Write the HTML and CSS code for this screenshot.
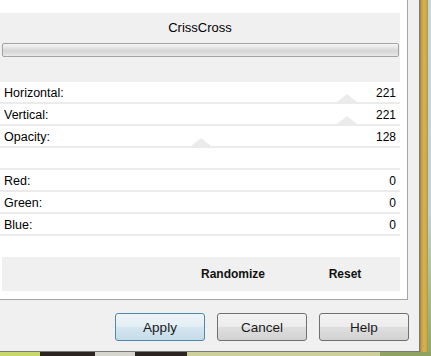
FILE: index.html
```html
<!DOCTYPE html>
<html>
<head>
<meta charset="utf-8">
<link rel="stylesheet" href="styles.css">
</head>
<body>
<div class="screen">
  <div class="top">
    <div class="dialog">
      <div class="panel">
        <div class="header">
          <div class="title">CrissCross</div>
          <div class="bar"></div>
        </div>
        <div class="rows">
          <div class="row"><span class="lbl">Horizontal:</span><span class="val">221</span><i class="thumb" style="left:86.7%"></i></div>
          <div class="row"><span class="lbl">Vertical:</span><span class="val">221</span><i class="thumb" style="left:86.7%"></i></div>
          <div class="row"><span class="lbl">Opacity:</span><span class="val">128</span><i class="thumb" style="left:50.2%"></i></div>
          <div class="row"></div>
          <div class="row"><span class="lbl">Red:</span><span class="val">0</span></div>
          <div class="row"><span class="lbl">Green:</span><span class="val">0</span></div>
          <div class="row"><span class="lbl">Blue:</span><span class="val">0</span></div>
        </div>
        <div class="band">
          <button class="flat">Randomize</button>
          <button class="flat">Reset</button>
        </div>
      </div>
      <div class="buttons">
        <button class="btn default">Apply</button>
        <button class="btn">Cancel</button>
        <button class="btn">Help</button>
      </div>
    </div>
    <div class="side">
      <div class="gold"></div>
      <div class="glass"></div>
    </div>
  </div>
  <div class="ground"></div>
</div>
</body>
</html>
```

FILE: styles.css
```css
html, body {
  margin: 0;
  padding: 0;
  overflow: hidden;
}
body {
  width: 431px;
  height: 356px;
  font-family: "Liberation Sans", Arial, sans-serif;
  color: #000;
}
.screen {
  width: 431px;
  height: 356px;
  display: flex;
  flex-direction: column;
}
.top {
  display: flex;
  height: 352px;
}
.dialog {
  width: 419px;
  height: 351px;
  background: #f0f0f0;
  border-right: 1px solid #7a7a7a;
  border-bottom: 1px solid #7a7a7a;
}
.panel {
  width: 407px;
  height: 286px;
  padding-top: 13px;
  background: #fff;
  border-right: 1px solid #a5a5a5;
  border-bottom: 1px solid #a5a5a5;
}
.header {
  width: 400px;
  height: 69px;
  background: #f0f0f0;
}
.title {
  height: 28px;
  line-height: 30px;
  text-align: center;
  font-size: 13px;
}
.bar {
  box-sizing: border-box;
  width: 397px;
  height: 14px;
  margin: 2px 0 0 2px;
  border: 1px solid #a3a3a3;
  border-radius: 2px;
  background: linear-gradient(#f6f6f6 0%, #e6e6e6 30%, #d6d6d6 55%, #dedede 80%, #ebebeb 100%);
}
.rows {
  width: 400px;
}
.row {
  position: relative;
  height: 18px;
  padding: 2px 4px 0 4px;
  border-bottom: 2px solid #ebebeb;
  display: flex;
  align-items: center;
  justify-content: space-between;
  font-size: 12.5px;
}
.val {
  font-size: 12px;
}
.thumb {
  position: absolute;
  bottom: 0;
  width: 0;
  height: 0;
  transform: translateX(-50%);
  border-left: 10px solid transparent;
  border-right: 10px solid transparent;
  border-bottom: 8px solid #ebebeb;
}
.band {
  width: 393px;
  height: 34px;
  margin: 21px 0 0 2px;
  padding-right: 5px;
  background: #f0f0f0;
  display: flex;
  justify-content: flex-end;
  align-items: center;
  gap: 12px;
}
.flat {
  width: 100px;
  height: 34px;
  padding: 0;
  border: none;
  background: transparent;
  font-family: "Liberation Sans", Arial, sans-serif;
  font-weight: bold;
  font-size: 12px;
  color: #111;
}
.buttons {
  display: flex;
  justify-content: flex-end;
  gap: 12px;
  padding-right: 10px;
  margin-top: 13px;
}
.btn {
  box-sizing: border-box;
  width: 90px;
  height: 28px;
  padding: 0;
  border: 1px solid #707070;
  border-radius: 3px;
  background: linear-gradient(#f3f3f3 0%, #ececec 50%, #dfdfdf 50%, #d2d2d2 100%);
  font-family: "Liberation Sans", Arial, sans-serif;
  font-size: 13.5px;
  color: #1a1a1a;
}
.btn.default {
  border-color: #4f87ad;
  background: linear-gradient(#eef5f9 0%, #e3eef4 50%, #d4e6f0 50%, #c5dce9 100%);
}
.side {
  display: flex;
  width: 11px;
  height: 352px;
}
.gold {
  width: 8px;
  background: linear-gradient(to right, #8c7a3e 0, #c49c3c 1px, #d6b24e 4px, #c8a848 7px, #9b8a48 8px);
}
.glass {
  width: 3px;
  background: linear-gradient(#c4d6e6 0%, #bcd0e2 60%, #a9bf9a 80%, #8fa86a 100%);
}
.ground {
  height: 4px;
  background: linear-gradient(to right, #c8d86a 0, #c8d86a 40px, #2b2420 40px, #2b2420 95px, #d6d6ce 95px, #d6d6ce 135px, #2b2420 135px, #2b2420 187px, #cdd09a 187px, #cdd09a 380px, #8fa262 380px);
}
```
